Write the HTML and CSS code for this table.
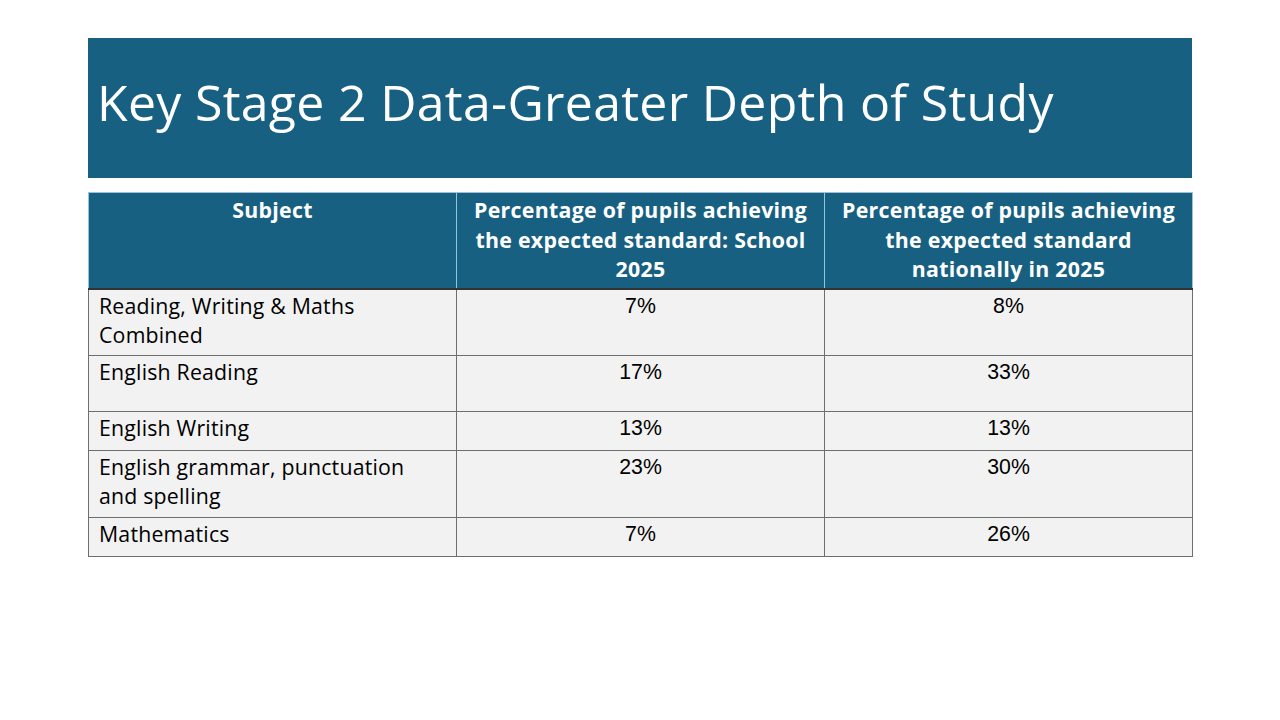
FILE: index.html
```html
<!DOCTYPE html>
<html lang="en">
<head>
<meta charset="utf-8">
<title>Key Stage 2 Data-Greater Depth of Study</title>
<link rel="stylesheet" href="styles.css">
</head>
<body>
<main class="slide">
  <header class="banner">
    <h1 class="title">Key Stage 2 Data-Greater Depth of Study</h1>
  </header>
  <table class="data">
    <colgroup>
      <col class="c1"><col class="c2"><col class="c3">
    </colgroup>
    <thead>
      <tr>
        <th>Subject</th>
        <th>Percentage of pupils achieving the expected standard: School 2025</th>
        <th>Percentage of pupils achieving the expected standard nationally in 2025</th>
      </tr>
    </thead>
    <tbody>
      <tr class="r-tall">
        <td class="subj">Reading, Writing &amp; Maths Combined</td>
        <td class="num">7%</td>
        <td class="num">8%</td>
      </tr>
      <tr class="r-mid">
        <td class="subj">English Reading</td>
        <td class="num">17%</td>
        <td class="num">33%</td>
      </tr>
      <tr class="r-short">
        <td class="subj">English Writing</td>
        <td class="num">13%</td>
        <td class="num">13%</td>
      </tr>
      <tr class="r-tall">
        <td class="subj">English grammar, punctuation and spelling</td>
        <td class="num">23%</td>
        <td class="num">30%</td>
      </tr>
      <tr class="r-short">
        <td class="subj">Mathematics</td>
        <td class="num">7%</td>
        <td class="num">26%</td>
      </tr>
    </tbody>
  </table>
</main>
</body>
</html>
```
FILE: styles.css
```css
html, body {
  margin: 0;
  padding: 0;
  background: #ffffff;
}

.slide {
  width: 1280px;
  height: 720px;
  box-sizing: border-box;
  padding: 38px 88px 0 88px;
  display: flex;
  flex-direction: column;
  gap: 14px;
}

.banner {
  height: 140px;
  background: #176082;
  display: flex;
  align-items: center;
  padding: 0 0 12px 9px;
  box-sizing: border-box;
}

.title {
  margin: 0;
  color: #ffffff;
  font-family: "Open Sans", "Noto Sans", sans-serif;
  font-weight: 400;
  font-size: 50px;
  line-height: 1.2;
  letter-spacing: 0.3px;
  white-space: nowrap;
}

.data {
  width: 1104px;
  border-collapse: collapse;
  table-layout: fixed;
  font-family: "Open Sans", "Noto Sans", sans-serif;
}

.c1, .c2, .c3 { width: 368px; }

.data th {
  background: #176082;
  color: #ffffff;
  font-weight: 700;
  font-size: 21.3px;
  line-height: 29.5px;
  letter-spacing: 0.3px;
  text-align: center;
  vertical-align: top;
  height: 96px;
  box-sizing: border-box;
  padding: 2px 10px 0 10px;
  border-left: 1px solid #9cc2da;
  border-right: 1px solid #9cc2da;
  border-top: 1px solid #9cc2da;
}

.data td {
  background: #f2f2f2;
  color: #000000;
  vertical-align: top;
  box-sizing: border-box;
  padding: 1px 20px 0 10px;
  border: 1px solid #6e6e6e;
  line-height: 29px;
}

.data tbody tr:first-child td {
  border-top: 2px solid #333333;
}

.subj {
  font-family: "Open Sans", "Noto Sans", sans-serif;
  font-size: 21.3px;
  letter-spacing: 0.2px;
  text-align: left;
}

.data td.num {
  font-family: "Liberation Sans", Arial, sans-serif;
  font-size: 21.3px;
  text-align: center;
  padding-top: 2px;
  padding-right: 10px;
}

.r-tall td { height: 67px; }
.r-mid td { height: 56px; }
.r-short td { height: 39px; }
```
